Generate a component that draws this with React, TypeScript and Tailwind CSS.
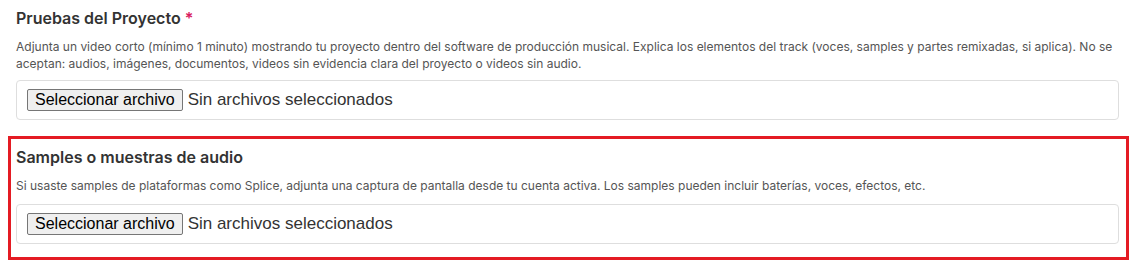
import React from "react";

function FileBox() {
  return (
    <div className="mt-2 flex h-10 items-center rounded border border-[#dedede] bg-white px-[10px]">
      <span className="flex items-center gap-[5px] font-['Liberation_Sans',Arial,sans-serif] text-base">
        <button
          type="button"
          className="h-[22px] rounded-[2px] border border-[#767676] bg-[#efefef] px-[7px] leading-[20px] text-black"
        >
          Seleccionar archivo
        </button>
        <span className="text-[17px] text-[#333]">Sin archivos seleccionados</span>
      </span>
    </div>
  );
}

export default function App() {
  return (
    <div className="h-[270px] w-[1139px] bg-white pl-4 pr-5 font-['Inter',sans-serif]">
      <section className="pt-[6px]">
        <h3 className="text-base font-semibold leading-6 text-[#333]">
          Pruebas del Proyecto <span className="text-[#d81b60]">*</span>
        </h3>
        <p className="mt-2 text-xs leading-[17px] text-[#555]">
          Adjunta un video corto (mínimo 1 minuto) mostrando tu proyecto dentro del software de producción musical. Explica los elementos del track (voces, samples y partes remixadas, si aplica). No se
          <br />
          aceptan: audios, imágenes, documentos, videos sin evidencia clara del proyecto o videos sin audio.
        </p>
        <FileBox />
      </section>

      <section className="-ml-2 -mr-[10px] mt-4 border-[3px] border-[#e41b23] pb-[13px] pl-[5px] pr-[7px] pt-[6px]">
        <h3 className="text-base font-semibold leading-6 text-[#333]">Samples o muestras de audio</h3>
        <p className="mt-[8px] text-xs leading-[17px] text-[#555]">
          Si usaste samples de plataformas como Splice, adjunta una captura de pantalla desde tu cuenta activa. Los samples pueden incluir baterías, voces, efectos, etc.
        </p>
        <div className="pt-[2px]">
          <FileBox />
        </div>
      </section>
    </div>
  );
}
